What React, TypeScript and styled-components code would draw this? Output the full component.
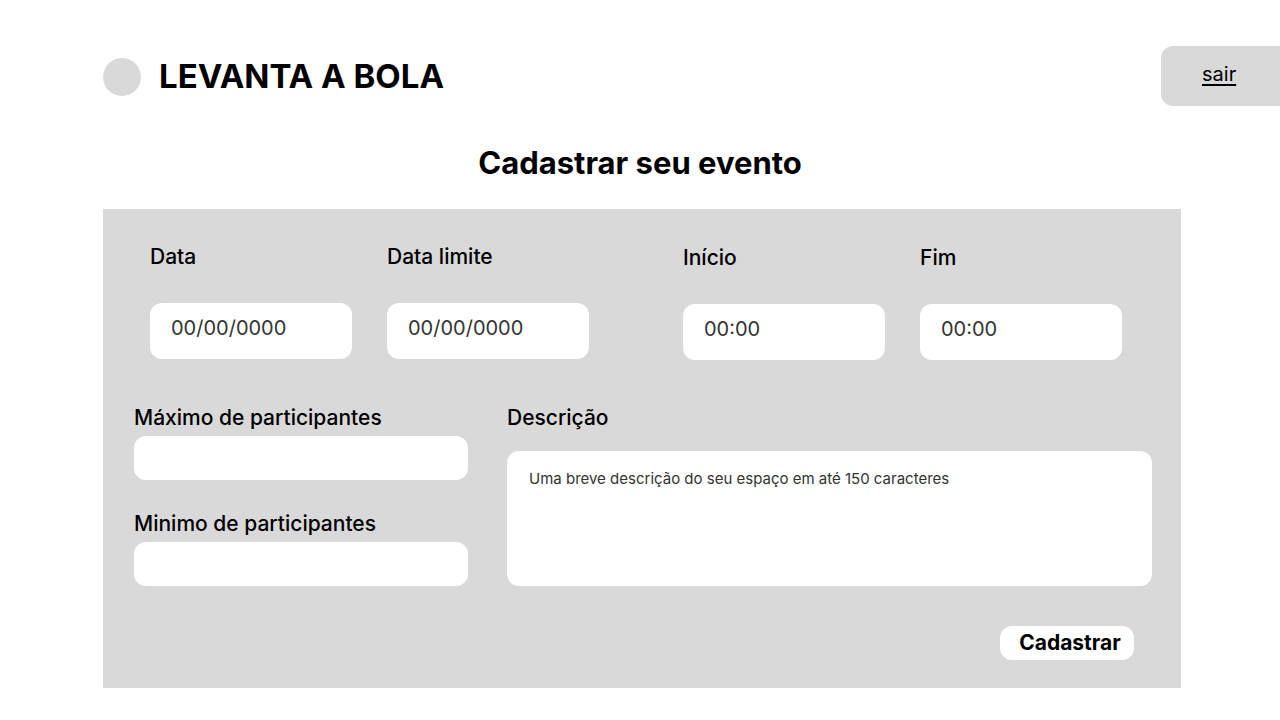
import React from "react";
import styled, { createGlobalStyle } from "styled-components";

const Global = createGlobalStyle`
  *, *::before, *::after { box-sizing: border-box; }
  body { margin: 0; background: #fff; color: #000; font-family: Inter, "Liberation Sans", sans-serif; }
  input, textarea, button { font: inherit; color: inherit; border: 0; margin: 0; }
`;

const Page = styled.div`
  padding: 46px 0 32px;
`;

const Header = styled.header`
  display: flex;
  justify-content: space-between;
  padding-left: 103px;
`;

const Brand = styled.div`
  display: flex;
  align-items: flex-end;
  gap: 18px;
  padding-bottom: 10px;
  font-size: 33px;
  line-height: 40px;
  font-weight: 700;
`;

const Logo = styled.span`
  width: 38px;
  height: 38px;
  border-radius: 50%;
  background: #d9d9d9;
`;

const Exit = styled.a`
  width: 119px;
  height: 60px;
  padding: 16px 0 0 41px;
  border-radius: 12px 0 0 12px;
  background: #d9d9d9;
  color: #000;
  font-size: 20px;
  line-height: 24px;
  text-underline-position: from-font;
`;

const Title = styled.h1`
  margin: 37px 0 26px;
  font-size: 31px;
  line-height: 40px;
  font-weight: 700;
  text-align: center;
`;

const Form = styled.form`
  margin: 0 99px 0 103px;
  padding: 35px 29px 28px 31px;
  background: #d9d9d9;
`;

const DateRow = styled.div`
  display: grid;
  grid-template-columns: 1fr 1fr;
  gap: 94px;
  padding: 0 30px 0 16px;
`;

const Pair = styled.div<{ $top?: number }>`
  display: grid;
  grid-template-columns: 1fr 1fr;
  gap: 35px;
  align-items: start;
  padding-top: ${(p) => p.$top ?? 0}px;
`;

const Field = styled.div<{ $gap: number }>`
  display: flex;
  flex-direction: column;
  gap: ${(p) => p.$gap}px;
`;

const Label = styled.label`
  font-size: 21px;
  line-height: 26px;
  font-weight: 500;
`;

const Input = styled.input<{ $tall?: boolean }>`
  width: 100%;
  height: ${(p) => (p.$tall ? 56 : 44)}px;
  padding: ${(p) => (p.$tall ? "0 21px 6px" : "0 21px")};
  border-radius: 12px;
  background: #fff;
  font-size: 20px;
  &::placeholder { color: #333; opacity: 1; }
`;

const Details = styled.div`
  display: grid;
  grid-template-columns: 334fr 645fr;
  gap: 39px;
  padding-top: 45px;
`;

const Stack = styled.div`
  display: flex;
  flex-direction: column;
  gap: 31px;
`;

const TextArea = styled.textarea`
  display: block;
  width: 100%;
  height: 135px;
  padding: 18px 22px;
  border-radius: 12px;
  background: #fff;
  resize: none;
  font-size: 15px;
  line-height: 20px;
  &::placeholder { color: #333; opacity: 1; }
`;

const Actions = styled.div`
  display: flex;
  justify-content: flex-end;
  padding: 40px 18px 0 0;
`;

const Submit = styled.button`
  width: 134px;
  height: 34px;
  padding: 0 0 0 6px;
  border-radius: 12px;
  background: #fff;
  font-size: 21px;
  line-height: 34px;
  font-weight: 700;
`;

type FieldProps = { id: string; label: string; placeholder?: string; tall?: boolean };

function TextField({ id, label, placeholder, tall }: FieldProps) {
  return (
    <Field $gap={tall ? 33 : 5}>
      <Label htmlFor={id}>{label}</Label>
      <Input id={id} name={id} type="text" placeholder={placeholder} $tall={tall} />
    </Field>
  );
}

export default function App() {
  return (
    <Page>
      <Global />
      <Header>
        <Brand><Logo />LEVANTA A BOLA</Brand>
        <Exit href="#sair">sair</Exit>
      </Header>
      <main>
        <Title>Cadastrar seu evento</Title>
        <Form>
          <DateRow>
            <Pair>
              <TextField id="data" label="Data" placeholder="00/00/0000" tall />
              <TextField id="limite" label="Data limite" placeholder="00/00/0000" tall />
            </Pair>
            <Pair $top={1}>
              <TextField id="inicio" label="Início" placeholder="00:00" tall />
              <TextField id="fim" label="Fim" placeholder="00:00" tall />
            </Pair>
          </DateRow>
          <Details>
            <Stack>
              <TextField id="maximo" label="Máximo de participantes" />
              <TextField id="minimo" label="Minimo de participantes" />
            </Stack>
            <Field $gap={20}>
              <Label htmlFor="descricao">Descrição</Label>
              <TextArea
                id="descricao"
                name="descricao"
                placeholder="Uma breve descrição do seu espaço em até 150 caracteres"
              />
            </Field>
          </Details>
          <Actions>
            <Submit type="button">Cadastrar</Submit>
          </Actions>
        </Form>
      </main>
    </Page>
  );
}
